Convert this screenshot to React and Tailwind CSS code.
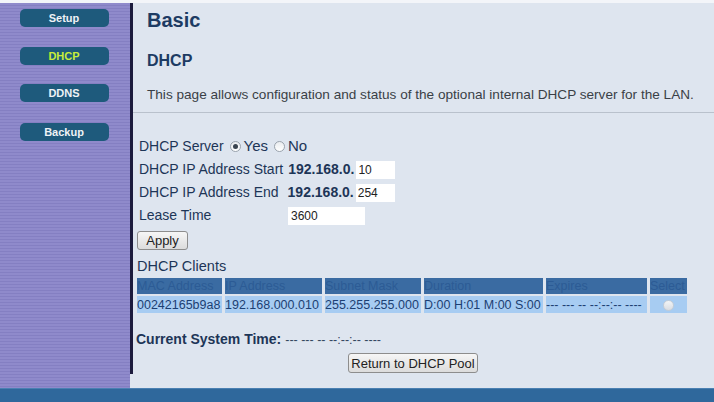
import { useState } from "react";

const navItems = [
  { label: "Setup", mt: "mt-[6px]" },
  { label: "DHCP", mt: "mt-[20px]", active: true },
  { label: "DDNS", mt: "mt-[19px]" },
  { label: "Backup", mt: "mt-[21px]" },
];

const clients = [
  {
    mac: "00242165b9a8",
    ip: "192.168.000.010",
    mask: "255.255.255.000",
    duration: "D:00 H:01 M:00 S:00",
    expires: "--- --- -- --:--:-- ----",
  },
];

function Radio({ checked, onClick }) {
  return (
    <span
      onClick={onClick}
      className="inline-flex items-center justify-center w-[11px] h-[11px] rounded-full border border-[#9aa3ad] bg-[linear-gradient(#e9ecef,#ffffff)] cursor-pointer"
    >
      {checked && <span className="w-[5px] h-[5px] rounded-full bg-[#3a4450]" />}
    </span>
  );
}

function GrayButton({ children, className = "" }) {
  return (
    <button
      className={
        "border border-[#8d8d8d] rounded-[3px] bg-[linear-gradient(#f6f6f6,#dcdcdc)] text-[13px] text-[#222] leading-none " +
        className
      }
    >
      {children}
    </button>
  );
}

export default function App() {
  const [server, setServer] = useState("yes");
  const [start, setStart] = useState("10");
  const [end, setEnd] = useState("254");
  const [lease, setLease] = useState("3600");

  return (
    <div className="w-[714px] h-[402px] flex flex-col bg-[#dee5ef] font-['Liberation_Sans',Arial,sans-serif] overflow-hidden">
      <div className="h-[3px] bg-[#f3f5f9]" />

      <div className="flex flex-1 min-h-0">
        {/* left menu */}
        <div className="w-[130px] flex flex-col items-center bg-[repeating-linear-gradient(to_bottom,#8f8acb_0px,#8f8acb_2px,#847fc2_2px,#847fc2_3px)]">
          {navItems.map((n) => (
            <div
              key={n.label}
              className={
                n.mt +
                " ml-[-2px] w-[89px] h-[18px] rounded-[5px] bg-[#1e5a7c] flex items-center justify-center text-[11px] font-bold " +
                (n.active ? "text-[#c8ee3a]" : "text-[#eef2f6]")
              }
            >
              {n.label}
            </div>
          ))}
        </div>
        <div className="w-[3px]">
          <div className="h-[371px] bg-[#1c1b3d]" />
        </div>

        {/* page body */}
        <div className="flex-1 flex flex-col">
          <div className="pl-[14px] pt-[6px]">
            <h1 className="text-[20px] leading-[23px] font-bold text-[#1d3b63]">Basic</h1>
            <h2 className="mt-[19px] text-[16px] leading-[19px] font-bold text-[#1d3b63]">DHCP</h2>
            <p className="mt-[17px] text-[13.6px] leading-[16px] text-[#3a3f46]">
              This page allows configuration and status of the optional internal DHCP server for the LAN.
            </p>
          </div>
          <div className="mt-[9px] h-px bg-[#b9c1cc]" />

          <div className="pl-[6px] pt-[22px] text-[#1d3557]">
            <div className="flex items-center h-[23px] text-[14px]">
              <span>DHCP Server</span>
              <span className="ml-[6px] flex items-center gap-[3px]">
                <Radio checked={server === "yes"} onClick={() => setServer("yes")} />
                <span className="text-[15px]">Yes</span>
              </span>
              <span className="ml-[6px] flex items-center gap-[3px]">
                <Radio checked={server === "no"} onClick={() => setServer("no")} />
                <span className="text-[15px]">No</span>
              </span>
            </div>

            <div className="flex items-center h-[23px] text-[14px]">
              <span>DHCP IP Address Start</span>
              <b className="ml-[5px]">192.168.0.</b>
              <input
                value={start}
                onChange={(e) => setStart(e.target.value)}
                className="ml-[2px] w-[39px] h-[18px] bg-white px-[2px] text-[12px] text-[#222] outline-none"
              />
            </div>

            <div className="flex items-center h-[23px] text-[14px]">
              <span>DHCP IP Address End</span>
              <b className="ml-[9px]">192.168.0.</b>
              <input
                value={end}
                onChange={(e) => setEnd(e.target.value)}
                className="ml-[2px] w-[39px] h-[18px] bg-white px-[2px] text-[12px] text-[#222] outline-none"
              />
            </div>

            <div className="flex items-center h-[23px] text-[14px]">
              <span className="w-[149px]">Lease Time</span>
              <input
                value={lease}
                onChange={(e) => setLease(e.target.value)}
                className="w-[77px] h-[18px] bg-white px-[3px] text-[12px] text-[#222] outline-none"
              />
            </div>

            <GrayButton className="mt-[4px] ml-[-2px] w-[51px] h-[19px]">Apply</GrayButton>

            <div className="mt-[5px] ml-[-2px] text-[14.5px] leading-[18px]">DHCP Clients</div>

            <table className="mt-[1px] ml-[-5px] w-[552px] table-fixed border-separate border-spacing-x-[3px] border-spacing-y-[2px] text-[12.5px] leading-[16px]">
              <colgroup>
                <col className="w-[85px]" />
                <col className="w-[97px]" />
                <col className="w-[96px]" />
                <col className="w-[119px]" />
                <col className="w-[101px]" />
                <col className="w-[37px]" />
              </colgroup>
              <thead>
                <tr className="bg-[#3a6ba2] text-[#2c5b95]">
                  {["MAC Address", "IP Address", "Subnet Mask", "Duration", "Expires", "Select"].map((h) => (
                    <th key={h} className="font-normal text-left whitespace-nowrap overflow-hidden p-0 h-[16px]">
                      {h}
                    </th>
                  ))}
                </tr>
              </thead>
              <tbody>
                {clients.map((c) => (
                  <tr key={c.mac} className="bg-[#a7ccf2] text-[#1c3f73]">
                    <td className="p-0 h-[17px] whitespace-nowrap">{c.mac}</td>
                    <td className="p-0 whitespace-nowrap">{c.ip}</td>
                    <td className="p-0 whitespace-nowrap">{c.mask}</td>
                    <td className="p-0 whitespace-nowrap">{c.duration}</td>
                    <td className="p-0 whitespace-nowrap overflow-hidden">{c.expires}</td>
                    <td className="p-0">
                      <div className="flex justify-center pt-[2px]">
                        <span className="w-[11px] h-[11px] rounded-full border border-[#c4ccd6] bg-[linear-gradient(#f2f4f6,#d9dde2)]" />
                      </div>
                    </td>
                  </tr>
                ))}
              </tbody>
            </table>

            <div className="mt-[14px] ml-[-3px] flex items-baseline">
              <b className="text-[14px]">Current System Time:</b>
              <span className="ml-[4px] text-[12.5px] text-[#33475f]">--- --- -- --:--:-- ----</span>
            </div>

            <div className="w-[548px] mt-[3px] flex justify-center">
              <GrayButton className="w-[130px] h-[20px]">Return to DHCP Pool</GrayButton>
            </div>
          </div>
        </div>
      </div>

      <div className="h-[14px] bg-[#2f689c] border-t border-[#4a80b2]" />
    </div>
  );
}
